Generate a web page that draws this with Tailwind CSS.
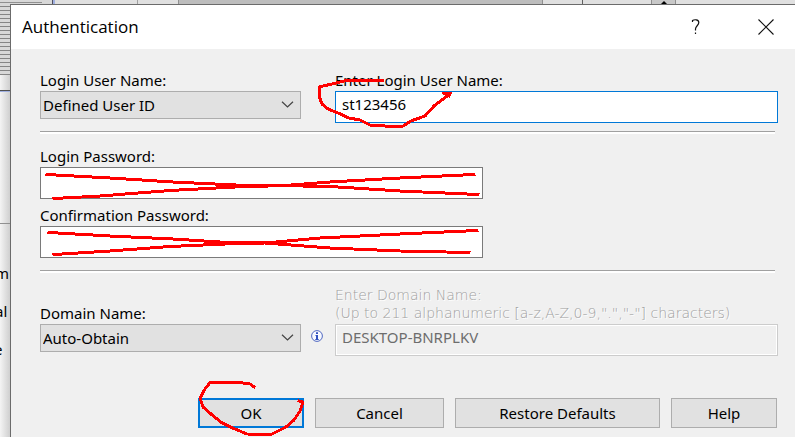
<!DOCTYPE html>
<html lang="en">
<head>
    <meta charset="UTF-8">
    <meta name="viewport" content="width=device-width, initial-scale=1.0">
    <title>Authentication</title>
    <script src="https://cdn.jsdelivr.net/npm/@tailwindcss/browser@4"></script>
</head>
<body class="h-screen overflow-hidden bg-[#f0f0f0] font-['Noto_Sans',sans-serif] text-[15px] leading-[18px] text-black">
    <div class="relative grid h-full grid-cols-[10px_1fr] grid-rows-[4px_1fr]">
        <!-- Window behind the dialog -->
        <div class="col-span-2 flex bg-[#e0e0e0]">
            <div class="flex w-[52px] items-center bg-[#d8d8d8]">
                <div class="h-px w-[42px] bg-[#909090]"></div>
            </div>
            <div class="w-[3px] border-l border-[#505060] bg-[#a0b0e0]"></div>
            <div class="w-[83px] border-r border-[#a0a0a0]"></div>
            <div class="w-[41px] border-r border-[#909090]"></div>
            <div class="flex-1 border-r border-[#909090] bg-[#bdbdbd]"></div>
            <div class="w-[40px] border-r border-[#606060]"></div>
            <div class="w-[69px] border-r border-[#909090]"></div>
            <div class="flex w-[24px] items-end justify-center border-r border-[#909090] bg-[#c8c8c8]">
                <svg class="h-[3px] w-[6px]" viewBox="0 0 6 3"><path d="M3 0L6 3H0Z" /></svg>
            </div>
            <div class="w-[119px]"></div>
        </div>
        <div class="flex flex-col overflow-hidden bg-linear-to-r from-[#f4f4f4] to-[#cfcfcf]">
            <div class="h-[71px] bg-[repeating-linear-gradient(to_bottom,#d8d8d8_0,#d8d8d8_2px,#858585_2px,#858585_3px,#d8d8d8_3px,#d8d8d8_4px)]"></div>
            <div class="mt-[15px] h-[2px] border-t border-[#505050] bg-[#a0b0e0]"></div>
            <div class="mt-[131px] border-t border-[#909090]"></div>
            <div class="mt-[40px] flex flex-col gap-[20px]">
                <span class="-ml-[5px]">m</span>
                <span class="-ml-[5px]">al</span>
                <span class="-ml-[6px]">e</span>
            </div>
        </div>

        <main class="border-t border-l border-[#6b6b6b] bg-[#f0f0f0]">
            <header class="flex h-[44px] items-center bg-white pr-[21px] pl-[11px]">
                <h1 class="flex-1 font-['Open_Sans',sans-serif] text-[17px]">Authentication</h1>
                <button type="button" aria-label="Help" class="mr-[57px]">
                    <svg class="h-[16px] w-[10px]" viewBox="0 0 10 16" fill="none" stroke="#111" stroke-width="1.2">
                        <path d="M1.5 3V1.5C3 .5 7.8 0 7.8 3.5C7.8 6.5 4.5 7 4.5 10V11.5M4.5 13.5V15" />
                    </svg>
                </button>
                <button type="button" aria-label="Close">
                    <svg class="h-[16px] w-[16px]" viewBox="0 0 16 16" stroke="#111" stroke-width="1.1">
                        <path d="M.5 .5L15.5 15.5M15.5 .5L.5 15.5" />
                    </svg>
                </button>
            </header>

            <form class="pt-[22px] pr-[17px] pl-[29px]">
                <div class="grid grid-cols-[261px_34px_1fr] items-start">
                    <div class="flex flex-col gap-[2px]">
                        <label for="userType">Login User Name:</label>
                        <div class="relative">
                            <select id="userType" class="h-[28px] w-full appearance-none border border-[#adadad] bg-[#e1e1e1] px-[2px]">
                                <option>Defined User ID</option>
                            </select>
                            <svg class="pointer-events-none absolute top-[10px] right-[7px] h-[7px] w-[13px]" viewBox="0 0 13 7" fill="none" stroke="#444" stroke-width="1.2"><path d="M1 .7L6.5 6L12 .7" /></svg>
                        </div>
                    </div>
                    <div class="col-start-3 flex flex-col gap-[2px]">
                        <label for="userName">Enter Login User Name:</label>
                        <input type="text" id="userName" value="st123456" class="h-[32px] w-full border border-[#0078d7] bg-white px-[6px] pb-[7px] outline-none">
                    </div>
                </div>

                <hr class="mt-[8px] mr-[3px] h-[3px] border-t border-b-2 border-t-[#a0a0a0] border-b-white">

                <div class="mt-[13px] flex w-[443px] flex-col gap-[2px]">
                    <label for="password">Login Password:</label>
                    <input type="password" id="password" class="h-[32px] border border-[#7a7a7a] bg-white px-[6px]">
                    <label for="confirm" class="mt-[5px]">Confirmation Password:</label>
                    <input type="password" id="confirm" class="h-[32px] border border-[#7a7a7a] bg-white px-[6px]">
                </div>

                <hr class="mt-[12px] mr-[3px] h-[3px] border-t border-b-2 border-t-[#a0a0a0] border-b-white">

                <div class="mt-[12px] grid grid-cols-[261px_34px_1fr] items-start">
                    <div class="flex flex-col gap-[2px] pt-[19px]">
                        <label for="domainType">Domain Name:</label>
                        <div class="relative">
                            <select id="domainType" class="h-[28px] w-full appearance-none border border-[#adadad] bg-[#e1e1e1] px-[2px]">
                                <option>Auto-Obtain</option>
                            </select>
                            <svg class="pointer-events-none absolute top-[10px] right-[7px] h-[7px] w-[13px]" viewBox="0 0 13 7" fill="none" stroke="#444" stroke-width="1.2"><path d="M1 .7L6.5 6L12 .7" /></svg>
                        </div>
                    </div>
                    <svg class="mt-[45px] ml-[10px] h-[12px] w-[12px]" viewBox="0 0 12 12">
                        <circle cx="6" cy="6" r="5.4" fill="#f6f8ff" stroke="#5068c0" />
                        <path d="M5 2.3H7V4H5ZM4.5 5H7V9H7.7V10H4.3V9H5V6H4.5Z" fill="#3050c0" />
                    </svg>
                    <div class="flex flex-col gap-[2px]">
                        <label for="domain" class="pt-px font-['DejaVu_Sans',sans-serif] text-[14px] font-extralight text-[#a0a0a0] text-shadow-[1px_1px_0_#fff]">Enter Domain Name:<br>(Up to 211 alphanumeric [a-z,A-Z,0-9,".","-"] characters)</label>
                        <input type="text" id="domain" value="DESKTOP-BNRPLKV" disabled class="h-[32px] w-full border border-[#cccccc] bg-[#f0f0f0] px-[6px] pb-[7px] text-[#6d6d6d] inset-ring inset-ring-white">
                    </div>
                </div>

                <div class="mt-[42px] mr-px flex justify-end gap-[11px]">
                    <button type="submit" class="h-[30px] w-[106px] border-2 border-[#0078d7] bg-[#e1e1e1]">OK</button>
                    <button type="button" class="h-[30px] w-[129px] border border-[#adadad] bg-[#e1e1e1]">Cancel</button>
                    <button type="reset" class="h-[30px] w-[205px] border border-[#adadad] bg-[#e1e1e1]">Restore Defaults</button>
                    <button type="button" class="h-[30px] w-[106px] border border-[#adadad] bg-[#e1e1e1]">Help</button>
                </div>
            </form>
        </main>

        <!-- Red pen marks -->
        <svg class="pointer-events-none absolute top-0 left-0 h-[437px] w-[795px]" viewBox="0 0 795 437" fill="none" stroke="#f00" stroke-width="3" stroke-linecap="square" stroke-linejoin="round" shape-rendering="crispEdges">
            <path d="M382 80.500H346L332 84L319 87V96L322 104L328 109L338 113L349 118L360 120L370 125L393 126.500L403 126L411 121L425 116L434 106L451 93L443 93L449 96" />
            <path d="M47 174.500L110 178L173 182L236 185L285 185.500L338 187L400 191L478 194.500M54 198.500L100 196L170 190.500L235 187L285 185.500L330 182L400 178L474 174.500" />
            <path d="M49 232.500L110 236L173 239L220 242L265 243L330 248L400 251L469 252.500M54 254.500L110 251L170 246.500L225 244L265 243L320 238L400 234L477 230.500" />
            <path d="M254 387L250 384L240 382.500H210L205 389L200 398L203 407L211 414L222 423L235 429L247 434L271 434.500L286 427L294 420L300 411L303 402L299 401" />
        </svg>
    </div>
</body>
</html>
